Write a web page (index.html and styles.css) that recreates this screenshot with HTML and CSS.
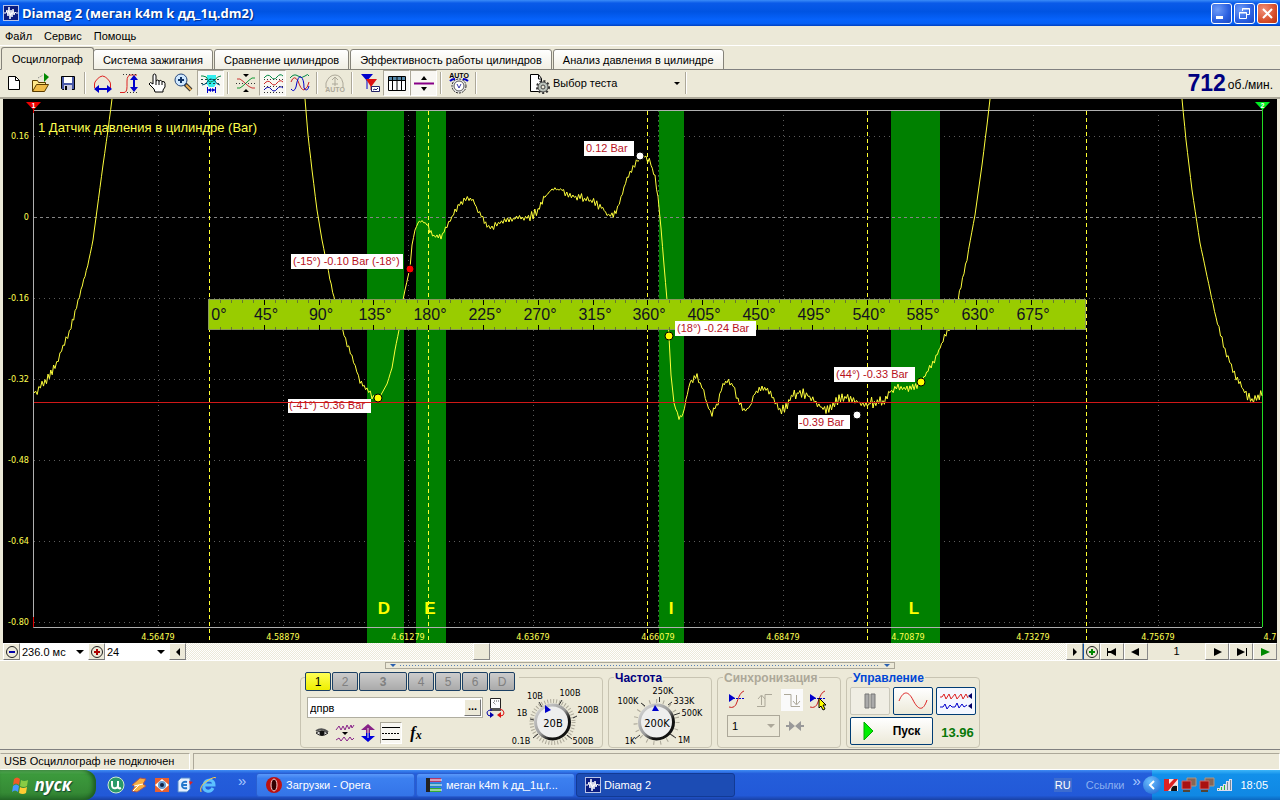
FILE: index.html
```html
<!DOCTYPE html>
<html lang="ru">
<head>
<meta charset="utf-8">
<title>Diamag 2</title>
<link rel="stylesheet" href="styles.css">
</head>
<body>
<header class="titlebar">
  <svg class="appicon" width="16" height="16" viewBox="0 0 16 16"><rect width="16" height="16" fill="#b8c4e8"/><rect x="1" y="1" width="14" height="14" fill="#0a1c80"/><path d="M1 8h2l1-3 1 6 1-9 1 12 1-9 1 7 1-8 1 6 1-3 1 1h2" fill="none" stroke="#fff"/></svg>
  <h1 class="title">Diamag 2 (меган k4m k дд_1ц.dm2)</h1>
  <div class="winbtns">
    <button class="winbtn" aria-label="Свернуть"><svg width="19" height="19"><path d="M4 13.500h7" stroke="#fff" stroke-width="3"/></svg></button>
    <button class="winbtn" aria-label="Восстановить"><svg width="19" height="19" fill="none" stroke="#fff"><path d="M7.500 7V4.500h7v6H12M7 5h8"/><path d="M4.500 8.500h7v6h-7zM4 9h8" /></svg></button>
    <button class="winbtn close" aria-label="Закрыть"><svg width="19" height="19"><path d="M5 5l9 9M14 5l-9 9" stroke="#fff" stroke-width="2"/></svg></button>
  </div>
</header>
<nav class="menu"><button>Файл</button><button>Сервис</button><button>Помощь</button></nav>
<div class="tabs" role="tablist">
  <button role="tab" class="tab active" aria-selected="true">Осциллограф</button><button role="tab" class="tab">Система зажигания</button><button role="tab" class="tab">Сравнение цилиндров</button><button role="tab" class="tab">Эффективность работы цилиндров</button><button role="tab" class="tab">Анализ давления в цилиндре</button>
</div>
<div class="toolbar">
  <button class="tool" aria-label="Новый"><svg width="22" height="22"><path d="M5.500 4.500h7l4 4v9h-11z" fill="#fff" stroke="#000"/><path d="M12.500 4.500v4h4" fill="none" stroke="#000"/></svg></button>
  <button class="tool" aria-label="Открыть"><svg width="22" height="22"><path d="M2.500 19V8.500h5l1 2h7V13" fill="#ffe88a" stroke="#5a3c00"/><path d="M2.500 19.500l4-7h12l-4 7z" fill="#f0bc48" stroke="#5a3c00"/><path d="M14 1l5 4-5 5z" fill="#080"/><path d="M8 6l5-3" stroke="#777" stroke-dasharray="1 1"/></svg></button>
  <button class="tool" aria-label="Сохранить"><svg width="22" height="22"><path d="M4.500 4.500h13v13h-12l-1-1z" fill="#4858a8" stroke="#000"/><path d="M7 5h8v6H7z" fill="#fff"/><path d="M7 13h8v5H7z" fill="#ccd"/><path d="M8 14h2v4H8z" fill="#000"/></svg></button>
  <i class="sep"></i>
  <button class="tool" aria-label="По горизонтали"><svg width="22" height="22" fill="none"><path d="M2.500 16v-4q0-2 2-4 3-4 6-4t6 4q2 2 2 4v4" stroke="#d22"/><path d="M5 17h12" stroke="#00c" stroke-width="2"/><path d="M2 17l5-4v8zM20 17l-5-4v8z" fill="#00c"/></svg></button>
  <button class="tool" aria-label="По вертикали"><svg width="22" height="22" fill="none"><path d="M1 20.500h4q3 0 3-6V9q0-6 4-6h6" stroke="#d22"/><path d="M4 2.500h15M8 20.500h10" stroke="#333" stroke-dasharray="1 2"/><path d="M15 7v10" stroke="#00c" stroke-width="2"/><path d="M15 3l-4 5h8zM15 20l-4-5h8z" fill="#00c"/></svg></button>
  <button class="tool" aria-label="Рука"><svg width="22" height="22"><path d="M7 12V4q0-2 1.500-2T10 4v5q2-2 3 0 2-1.500 3 .5 3-.5 3 2V15l-2 3v2H9l-1-3-5-5q1-3 4 0zM10 9v4M13 9v4M16 10v3" fill="#fff" stroke="#000"/></svg></button>
  <button class="tool" aria-label="Увеличить"><svg width="22" height="22"><path d="M12 12l6 6" stroke="#333" stroke-width="4"/><path d="M13 13l5 5" stroke="#f0b050" stroke-width="2"/><circle cx="8" cy="8" r="6" fill="#cfe8ff" stroke="#23467c"/><path d="M5 8h6M8 5v6" stroke="#136" stroke-width="2"/></svg></button>
  <button class="tool pressed" aria-label="Диапазон"><svg width="22" height="22" fill="none"><path d="M7 3h9v9l-2 3h-5l-2-3z" fill="#3ee"/><path d="M1 4h2q4 0 5 4t7 0q2-4 6-4" stroke="#084"/><path d="M1 7.500h20M1 11.500h20" stroke="#244" stroke-dasharray="2 2"/><path d="M2 13q4 0 6-4t7 0q2 4 5 4" stroke="#057"/><path d="M7.500 15v6M15.500 15v6M8 18h7" stroke="#00c"/><path d="M8 18l3-2v4zM15 18l-3-2v4z" fill="#00c"/></svg></button>
  <i class="sep"></i>
  <button class="tool" aria-label="Совместить"><svg width="22" height="22" fill="none"><path d="M2 7h3q3 2 6 5t6 4h3" stroke="#c33"/><path d="M2 16h3q3-2 6-5t6-5h3" stroke="#193"/><path d="M1 11.500h20" stroke="#333" stroke-dasharray="1 2"/><path d="M8 2h6l-3 3zM8 20h6l-3-3z" fill="#000"/></svg></button>
  <button class="tool pressed" aria-label="Разделить"><svg width="22" height="22" fill="none"><path d="M2 6q4-5 7-1t6 0 6-1" stroke="#084"/><path d="M2 12q4-5 7-1t6 0 6-1" stroke="#c22"/><path d="M2 18q4-5 7-1t6 0 6-1" stroke="#00a"/><path d="M2 7.500h19M2 14.500h19M2 20.500h19" stroke="#333" stroke-dasharray="1 2"/></svg></button>
  <button class="tool" aria-label="Наложить"><svg width="22" height="22" fill="none"><path d="M1 6q4-5 8-2t7 0 4 0" stroke="#084"/><path d="M2 10q3-8 7-1 3 9 6 9 4-2 5-8" stroke="#c22"/><path d="M2 17q3 4 5-2 2-12 5-10t3 11q3 5 5-2" stroke="#00c"/></svg></button>
  <i class="sep"></i>
  <button class="tool" disabled aria-label="Авто"><svg width="22" height="22" fill="none" stroke="#aca899"><path d="M2 16V11Q5 3 11 3t8 8v5M11 5v9M8 8l3-3 3 3M8 12h6"/><text class="auto" x="11" y="20" text-anchor="middle" stroke="none" fill="#aca899">AUTO</text></svg></button>
  <i class="sep"></i>
  <button class="tool" aria-label="Маркеры"><svg width="22" height="22"><path d="M2 2h12L8 9z" fill="#00c"/><path d="M8 8v9" stroke="#00c"/><path d="M7 7h11l-6 8z" fill="#d11"/><path d="M12 14v4" stroke="#d11"/><path d="M12.500 14.500h8v5h-8z" fill="#fff" stroke="#226"/><path d="M14 18l2-1 1 1 2-2" fill="none" stroke="#226"/></svg></button>
  <button class="tool pressed" aria-label="Таблица"><svg width="22" height="22"><path d="M2.500 4.500h17v14h-17z" fill="#fff" stroke="#000"/><path d="M3 5h16v3H3z" fill="#58a"/><path d="M3 8.500h16M6.500 5v13M11 5v13M15.500 5v13" stroke="#000"/></svg></button>
  <button class="tool pressed" aria-label="Линия"><svg width="22" height="22"><path d="M1 11.500h20" stroke="#808" stroke-width="2"/><path d="M8 8h6l-3-4zM8 15h6l-3 4z" fill="#000"/></svg></button>
  <i class="sep"></i>
  <button class="tool" aria-label="Автонастройка"><svg width="22" height="24"><text class="auto" x="11" y="7" text-anchor="middle">AUTO</text><circle cx="11" cy="15" r="7" fill="#e8e8e8" stroke="#222" stroke-dasharray="2 1"/><circle cx="11" cy="15" r="5" fill="#fff" stroke="#555"/><path d="M2 10q2-2 5-2M20 10q-2-2-5-2" stroke="#00c" stroke-width="2" fill="none"/><path d="M9 13l2 4 2-4" fill="none" stroke="#33a"/></svg></button>
  <i class="sep"></i>
  <label class="test"><svg width="22" height="22"><path d="M2.500 2.500h8l3 4v13h-11z" fill="#fff" stroke="#000"/><path d="M10.500 3v4h3" fill="none" stroke="#000"/><circle cx="15" cy="15" r="6" fill="none" stroke="#333" stroke-width="2" stroke-dasharray="2 2"/><circle cx="15" cy="15" r="5" fill="#bcc4bc" stroke="#444"/><circle cx="15" cy="15" r="2" fill="#ece9d8" stroke="#444"/></svg>
    <select class="plain" aria-label="Выбор теста"><option>Выбор теста</option></select><i class="arrow small"></i></label>
  <i class="sep"></i>
  <div class="rpm"><b>712</b><span>об./мин.</span></div>
</div>
<main class="scope">
<svg class="chart" viewBox="3 99 1274 544" preserveAspectRatio="xMidYMid meet">
  <rect x="3" y="99" width="1274" height="544" fill="#000"/>
  <g id="grid" stroke="#5c5c5c" stroke-dasharray="1 4"></g>
  <path d="M367 111h37v532h-37zM416 111h30v532h-30zM659 111h25v532h-25zM891 111h49v532h-49z" fill="#008000"/>
  <path d="M34 217.500H1262" stroke="#858585" stroke-dasharray="3 3"/>
  <path d="M658.500 111V627" stroke="#1e6b1e" stroke-dasharray="1 4"/>
  <path d="M34 110.500H1262M33.500 110V627.500H1262" stroke="#b0b0b0" fill="none"/>
  <path d="M33.500 106v7M33.500 617v10" stroke="#d00"/>
  <path d="M26 102h15l-7.500 8z" fill="#e00"/><path d="M1262.500 106V627" stroke="#2d2"/><path d="M1255 102h15l-7.500 8z" fill="#0e2"/>
  <text class="mark" x="33.500" y="108">1</text><text class="mark" x="1262.500" y="108">2</text>
  <path d="M209.500 111V643M428.500 111V643M647.500 111V643M867.500 111V643M1086.500 111V643" stroke="#ffff30" stroke-dasharray="4 3"/>
  <g class="ylab"><text x="29" y="139">0.16</text><text x="29" y="220">0</text><text x="29" y="301">-0.16</text><text x="29" y="382">-0.32</text><text x="29" y="463">-0.48</text><text x="29" y="544">-0.64</text><text x="29" y="625">-0.80</text></g>
  <g class="xlab"><text x="158" y="640">4.56479</text><text x="283" y="640">4.58879</text><text x="408" y="640">4.61279</text><text x="533" y="640">4.63679</text><text x="658" y="640">4.66079</text><text x="783" y="640">4.68479</text><text x="908" y="640">4.70879</text><text x="1033" y="640">4.73279</text><text x="1158" y="640">4.75679</text><text x="1270" y="640">4.7</text></g>
  <text class="chan" x="38" y="132">1 Датчик давления в цилиндре (Bar)</text>
  <g class="zone"><text x="384" y="614">D</text><text x="430" y="614">E</text><text x="671" y="614">I</text><text x="914" y="614">L</text></g>
  <g id="wave" fill="none" stroke="#ffff3c"></g>
  <rect x="208.500" y="299.500" width="877" height="30" fill="#9c0" stroke="#8a9a5a"/>
  <g id="ruler"></g>
  <path d="M584 141h50v15h-50zM291 254h112v15H291zM288 399h83v14h-83zM675 321h81v15h-81zM834 367h81v15h-81zM798 415h52v14h-52z" fill="#fff"/>
  <g class="tag"><text x="586" y="152">0.12 Bar</text><text x="293" y="265">(-15°) -0.10 Bar (-18°)</text><text x="289" y="409">(-41°) -0.36 Bar</text><text x="677" y="332">(18°) -0.24 Bar</text><text x="836" y="378">(44°) -0.33 Bar</text><text x="799" y="426">-0.39 Bar</text></g>
  <path d="M34 402.500H1262" stroke="#d01818"/>
  <g stroke="#000"><circle cx="640" cy="156" r="4" fill="#fff"/><circle cx="410" cy="269" r="4" fill="#f00"/><circle cx="378" cy="398" r="4" fill="#ff0"/><circle cx="669" cy="336" r="4" fill="#ff0"/><circle cx="921" cy="382" r="4" fill="#ff0"/><circle cx="857" cy="415" r="4" fill="#fff"/></g>
</svg>
</main>
<div class="scrollrow">
  <button class="sq" aria-label="Сжать"><svg width="16" height="16" fill="none"><circle cx="8" cy="8" r="5.500" stroke="#222"/><path d="M5 8h6" stroke="#00a" stroke-width="2"/></svg></button>
  <span class="combo time"><select aria-label="Развёртка"><option>236.0 мс</option></select><i class="arrow"></i></span>
  <button class="sq" aria-label="Растянуть"><svg width="16" height="16" fill="none"><circle cx="8" cy="8" r="5.500" stroke="#222"/><path d="M5 8h6M8 5v6" stroke="#a00" stroke-width="2"/></svg></button>
  <span class="combo count"><select aria-label="Масштаб"><option>24</option></select><i class="arrow"></i></span>
  <button class="sq" aria-label="Влево"><svg width="16" height="16"><path d="M10 4v8L6 8z"/></svg></button>
  <div class="track"><span class="thumb"></span></div>
  <button class="sq" aria-label="Вправо"><svg width="16" height="16"><path d="M6 4v8l4-4z"/></svg></button>
  <button class="sq focus" aria-label="Добавить"><svg width="16" height="16" fill="none"><circle cx="8" cy="8" r="5.500" stroke="#222"/><path d="M5 8h6M8 5v6" stroke="#080" stroke-width="2"/></svg></button>
  <button class="nav" aria-label="В начало"><svg width="16" height="16"><path d="M3 4h1v8H3zM5 8l7-4v8zM4 7h3v2H4z"/></svg></button>
  <button class="nav" aria-label="Назад"><svg width="16" height="16"><path d="M3 8l8-4v8z"/></svg></button>
  <output class="page">1</output>
  <button class="nav" aria-label="Вперёд"><svg width="16" height="16"><path d="M13 8L5 4v8z"/></svg></button>
  <button class="nav" aria-label="В конец"><svg width="16" height="16"><path d="M13 4h1v8h-1zM12 8L4 4v8z"/></svg></button>
  <button class="nav" aria-label="Воспроизвести"><svg width="16" height="16"><path d="M13 8L4 4v8z" fill="#080"/></svg></button>
</div>
<div class="splitter"><div class="groove"><i></i><span></span><i></i></div></div>
<section class="panel">
  <div class="group channel">
    <div class="chleft">
      <div class="chans"><button class="on">1</button><button>2</button><button class="wide">3</button><button>4</button><button>5</button><button>6</button><button>D</button></div>
      <div class="sensor"><span class="field"><input type="text" value="дпрв" aria-label="Датчик"><button aria-label="Обзор">...</button></span>
        <svg width="20" height="22"><path d="M4.500 1.500h10v10h-10z" fill="#fff" stroke="#222"/><path d="M4 11h11v3H4z" fill="#555"/><path d="M7 5l3 3M8 4h5" stroke="#555" stroke-dasharray="1 1"/><path d="M6 13q-5 0-5 3t4 3" stroke="#00a" fill="none"/><path d="M4 15l4 3-4 3z" fill="#00a"/><path d="M14 12q4 1 4 4t-4 3" stroke="#d11" fill="none"/><path d="M15 15l-4 3 4 3z" fill="#d11"/></svg></div>
      <div class="chtools">
        <button aria-label="Видимость"><svg width="20" height="20"><path d="M4 10q5-4 12 0-6 5-12 0z" fill="#ddd" stroke="#222"/><circle cx="10" cy="10" r="2.500" fill="#111"/><path d="M4 8q6-4 12 1" stroke="#555" stroke-width="2" fill="none"/></svg></button>
        <button aria-label="Фильтр"><svg width="20" height="20" fill="none"><path d="M1 7l3-4 2 4 2-4 2 4 2-5 2 4 2-4 1 3 2-3M1 17l3-2 2 3 3-4 3 4 3-4 2 3 2-2" stroke="#828"/><path d="M7 9h6l-3 3z" fill="#000"/></svg></button>
        <button aria-label="Смещение"><svg width="20" height="20"><path d="M10 1l7 6h-5v4H8V7H3z" fill="#828"/><path d="M10 19l7-6h-5v-3H8v3H3z" fill="#00d"/><path d="M10 5v10" stroke="#ece9d8"/></svg></button>
        <button class="pressed" aria-label="Связь"><svg width="20" height="20"><path d="M1 4.500h18M1 16.500h18" stroke="#000"/><path d="M1 10.500h18" stroke="#000" stroke-dasharray="2 1"/></svg></button>
        <button class="fx" aria-label="Функция">f<small>x</small></button>
      </div>
    </div>
    <svg class="dial" width="94" height="70" viewBox="508 678 94 70">
      <defs><linearGradient id="knob" x1="0" y1="0" x2="1" y2="1"><stop offset="0" stop-color="#ddd"/><stop offset=".5" stop-color="#999"/><stop offset=".7" stop-color="#111"/></linearGradient></defs>
      <circle cx="552.500" cy="722" r="21" fill="none" stroke="#aca899" stroke-width="4" stroke-dasharray="1 2"/><circle cx="552.500" cy="722" r="17" fill="#eee" stroke="url(#knob)" stroke-width="3"/>
      <path d="M545 705l6 5-6 3z" fill="#00c"/><path d="M530 719l4 1M539 702l3 5M559 705l3-5M573 718l4-2M533 738l5-4M567 735l5 4" stroke="#333"/>
      <g class="diallab"><text x="535" y="699">10В</text><text x="570" y="696">100В</text><text x="522" y="716">1В</text><text x="588" y="713">200В</text><text x="521" y="744">0.1В</text><text x="583" y="744">500В</text></g><text class="dialval" x="553" y="727">20В</text>
    </svg>
  </div>
  <div class="group freq"><span class="legend">Частота</span>
    <svg class="dial" width="104" height="70" viewBox="607 678 104 70">
      <circle cx="655.500" cy="722" r="21" fill="none" stroke="#aca899" stroke-width="4" stroke-dasharray="1 6"/><circle cx="655.500" cy="722" r="17" fill="#eee" stroke="url(#knob)" stroke-width="3"/>
      <path d="M651 711l3-6 4 6z" fill="#00c"/><path d="M640 703l4 3M658.500 697v5M667 705l4-3M673 715l6-2M634 739l5-4M669 734l6 4" stroke="#333"/>
      <g class="diallab"><text x="662" y="694">250K</text><text x="627" y="704">100K</text><text x="683" y="704">333K</text><text x="691" y="716">500K</text><text x="629" y="744">1K</text><text x="683" y="743">1M</text></g><text class="dialval" x="656" y="727">200K</text>
    </svg>
  </div>
  <div class="group sync"><span class="legend off">Синхронизация</span>
    <div class="row"><button aria-label="Уровень"><svg width="22" height="22" fill="none"><path d="M2 18q6 2 8-5 3-10 7-11" stroke="#c22"/><path d="M3 9.500h15" stroke="#00c" stroke-dasharray="2 1"/><path d="M2 5l6 4-6 4z" fill="#00c"/></svg></button>
      <button disabled aria-label="Фронт"><svg width="22" height="22" fill="none" stroke="#aca899"><path d="M3 17.500h8v-12h7M7.500 16V7M4 10l3.500-4 3.500 4"/></svg></button>
      <button disabled class="lit" aria-label="Спад"><svg width="22" height="22" fill="none" stroke="#aca899"><path d="M3 5.500h7v12h9M15.500 6v9M12 12l3.500 4 3.500-4"/></svg></button>
      <button aria-label="Выбор уровня"><svg width="22" height="22" fill="none"><path d="M2 18q6 2 8-5 3-10 7-11" stroke="#c22"/><path d="M3 9.500h15" stroke="#00c" stroke-dasharray="2 1"/><path d="M2 5l6 4-6 4z" fill="#00c"/><path d="M11 9v10l2-2 2 4 2-1-2-4h3z" fill="#ff0" stroke="#000"/></svg></button></div>
    <div class="row"><span class="combo syncnum"><select aria-label="Канал"><option>1</option></select><i class="arrow"></i></span><svg width="20" height="12"><path d="M1 6h5M14 6h5" stroke="#999" stroke-width="2"/><path d="M4 1l6 5-6 5zM16 1l-6 5 6 5z" fill="#999"/></svg></div>
  </div>
  <div class="group control"><span class="legend blue">Управление</span>
    <div class="row"><button class="big" disabled aria-label="Пауза"><svg width="30" height="20"><path d="M10 3h4v14h-4zM16 3h4v14h-4z" fill="#aaa" stroke="#777"/></svg></button>
      <button class="big" aria-label="Синус"><svg width="30" height="20" fill="none"><path d="M1 10C5 0 10-1 15 9s10 12 14 0" stroke="#d22"/></svg></button>
      <button class="big lit" aria-label="Сигналы"><svg width="34" height="22" fill="none"><path d="M1 7h2l2-3 2 5 3-5 2 5 4-5 2 5 4-5 2 5 3-5 2 4" stroke="#d22"/><path d="M1 17h3l2-3 2 5 3-4 2 2h3l2-4 2 5 3-4 2 3 3-2" stroke="#00c"/><path d="M33 3v6l-4-3zM33 13v6l-4-3z" fill="#006"/></svg></button></div>
    <div class="row"><button class="start"><svg width="12" height="20"><path d="M1 1l9 9-9 9z" fill="#0e0" stroke="#0a0"/></svg><b>Пуск</b></button><output class="volt">13.96</output></div>
  </div>
</section>
<footer class="status"><span class="cell">USB Осциллограф не подключен</span><span class="cell rest"></span></footer>
<div class="taskbar">
  <button class="startbtn"><svg width="20" height="20"><path d="M4 4q3-3 6 0L9 10q-3-3-6 0z" fill="#f05a28"/><path d="M11 5q3 2 7 0l-1 6q-3 2-7 0z" fill="#8c4"/><path d="M3 11q3-3 6 0l-1 6q-3-3-6 0z" fill="#49f"/><path d="M10 12q3 2 7 0l-1 6q-3 2-7 0z" fill="#fc3"/></svg><span>пуск</span></button>
  <div class="quick">
    <svg width="18" height="18"><circle cx="9" cy="9" r="8" fill="#2a9a6a" stroke="#cfe8d4"/><path d="M5 5v4q0 4 4 3 2 0 2-3V5m0 6q1 2 3 1" fill="none" stroke="#fff" stroke-width="2"/></svg>
    <svg width="18" height="18"><path d="M10 2l6 1-3 5 3 2-9 6-5-1 3-5-3-1z" fill="#f8b040" stroke="#a55"/><path d="M4 10l9-2M3 15l6-6" stroke="#fff"/></svg>
    <svg width="18" height="18"><path d="M2 2h14v14H2z" fill="#e86030"/><path d="M2 9l7-6 7 6-7 6z" fill="#fff"/><circle cx="9" cy="9" r="4" fill="#69c"/><circle cx="9" cy="9" r="2" fill="#124"/></svg>
    <svg width="18" height="18"><path d="M2 5l3-3h9v11l-3 3H2z" fill="#e4f0ff" stroke="#58c"/><path d="M11 6Q6 5 6 9t5 3M6 9h5" fill="none" stroke="#27c" stroke-width="2"/><path d="M13 5l4 1-3 3z" fill="#d22"/></svg>
    <svg width="18" height="18"><path d="M14 12q-2 4-6 3-4-1-3-6t6-5q4 1 4 5H6" fill="none" stroke="#5cc0ff" stroke-width="3"/><path d="M2 16Q0 10 8 5t9-3" fill="none" stroke="#fc4"/></svg>
  </div>
  <span class="chev">»</span>
  <button class="task"><svg width="18" height="18"><ellipse cx="9" cy="9" rx="8" ry="8" fill="#b11"/><ellipse cx="9" cy="9" rx="3" ry="6" fill="#300" stroke="#fcc"/></svg>Загрузки - Opera</button>
  <button class="task"><svg width="18" height="18"><path d="M1 2h15v4H1z" fill="#b3386a"/><path d="M1 7h15v4H1z" fill="#28b"/><path d="M1 12h15v4H1z" fill="#3a3"/><path d="M1 2h4v14H1z" fill="#222"/><path d="M5 4h12M5 9h12M5 14h12" stroke="#fff"/></svg>меган k4m k дд_1ц.r...</button>
  <button class="task current"><svg width="16" height="16"><rect width="16" height="16" fill="#b8c4e8"/><rect x="1" y="1" width="14" height="14" fill="#0a1c80"/><path d="M1 8h2l1-3 1 6 1-9 1 12 1-9 1 7 1-8 1 6 1-3 1 1h2" fill="none" stroke="#fff"/></svg>Diamag 2</button>
  <span class="lang">RU</span><span class="links">Ссылки</span><span class="chev">»</span>
  <div class="tray">
    <button class="hide" aria-label="Скрыть"><svg width="16" height="16"><path d="M10 4L6 8l4 4" fill="none" stroke="#fff" stroke-width="2"/></svg></button>
    <svg width="16" height="16"><path d="M1 2h14v12H1z" fill="#f4e4e4"/><path d="M1 2h5v5l5-5h4L5 14H1z" fill="#d22"/><path d="M8 14q0-6 6-5v5z" fill="#111"/></svg>
    <svg width="16" height="16"><path d="M6 1h9v8H6z" fill="#865" stroke="#a98"/><path d="M1 4h9v8H1z" fill="#a11" stroke="#c66"/><path d="M2 14h7" stroke="#543" stroke-width="2"/></svg>
    <svg width="16" height="16"><path d="M6 1h9v8H6z" fill="#865" stroke="#a98"/><path d="M1 4h9v8H1z" fill="#a11" stroke="#c66"/><path d="M2 14h7" stroke="#543" stroke-width="2"/></svg>
    <svg width="16" height="16"><path d="M0 11h3v3H0zM3 9h3v5H3zM6 7h3v7H6zM9 4h3v10H9zM12 2h3v12h-3z" fill="#dde"/><path d="M1 12h1v1H1zM4 10h1v3H4zM7 8h1v5H7z" fill="#3b3"/><path d="M10 5h1v8h-1zM13 3h1v10h-1z" fill="#789"/></svg>
    <time>18:05</time>
  </div>
</div>
<script src="app.js"></script>
</body>
</html>
```
FILE: styles.css
```css
* { box-sizing: border-box; }
body { margin: 0; min-height: 100vh; display: flex; flex-direction: column; background: #ece9d8; color: #000; font-family: "Liberation Sans", Arial, sans-serif; font-size: 11px; line-height: 14px; overflow-x: hidden; }
button, input, select { font: inherit; color: inherit; margin: 0; padding: 0; border: 0; background: none; border-radius: 0; }
button { display: flex; align-items: center; justify-content: center; flex-shrink: 0; }
select { appearance: none; outline: 0; }
svg { display: block; flex-shrink: 0; }

.titlebar { height: 26px; display: flex; align-items: center; padding: 0 2px 0 3px; gap: 3px; background: linear-gradient(#3a8cf8 0, #0a5ae8 12%, #0054e3 45%, #0662fb 75%, #0660f5 90%, #0040c0); }
.title { margin: 0; flex: 1; color: #fff; font: bold 13px/20px "Open Sans", sans-serif; text-shadow: 1px 1px 1px #002a80; }
.winbtns { display: flex; gap: 2px; }
.winbtn { width: 21px; height: 21px; border: 1px solid #fff; border-radius: 3px; background: radial-gradient(circle at 30% 30%, #6f9cf8, #2a5fe0 60%, #1c48c0); }
.winbtn.close { background: radial-gradient(circle at 30% 30%, #f0907a, #d8502c 60%, #b83010); }

.menu { height: 20px; display: flex; gap: 12px; padding-left: 5px; border-bottom: 1px solid #fff; }
.tabs { display: flex; align-items: flex-end; height: 24px; padding-left: 1px; gap: 1px; box-shadow: inset 0 -1px #808080; }
.tab { height: 21px; padding: 0 9px; border: 1px solid #85837a; border-radius: 3px 3px 0 0; background: linear-gradient(#fff, #f1efe4); }
.tab.active { height: 23px; padding: 0 10px; margin-right: -2px; background: #ece9d8; border-bottom-color: #ece9d8; }

.toolbar { display: flex; align-items: center; height: 29px; padding-bottom: 1px; border-bottom: 2px solid #aca899; }
.tool { width: 27px; height: 26px; }
.pressed { border: 1px solid; border-color: #aca899 #fff #fff #aca899; background: #f8f7f2; }
.sep { width: 8px; height: 22px; flex-shrink: 0; background: linear-gradient(90deg, transparent 3px, #aca899 3px, #aca899 4px, #fff 4px, #fff 5px, transparent 5px); }
.auto { font: bold 7px "Liberation Sans", sans-serif; }
.test { display: flex; align-items: center; gap: 3px; width: 154px; margin-left: 48px; padding-right: 2px; flex-shrink: 0; }
.plain { flex: 1; min-width: 0; }
.arrow { width: 0; height: 0; border: 4px solid transparent; border-top-color: currentColor; border-bottom: 0; flex-shrink: 0; pointer-events: none; }
.arrow.small { border-width: 3px 3px 0; }
.rpm { margin-left: auto; padding-right: 7px; display: flex; align-items: center; gap: 2px; font-size: 12px; }
.rpm b { font: bold 23px/24px "Liberation Sans", sans-serif; color: #000080; }
.rpm span { padding-top: 3px; }

.scope { flex: 1 1 0; min-height: 0; display: flex; padding: 0 3px; }
.chart { width: 100%; height: 100%; background: #000; }
.ylab, .xlab { fill: #ffff50; font-size: 9px; font-family: "DejaVu Sans Condensed", sans-serif; }
.ylab { text-anchor: end; }
.xlab { text-anchor: middle; }
.mark { fill: #fff; font-size: 7px; font-weight: bold; text-anchor: middle; }
.chan { fill: #ffff50; font-size: 13px; }
.zone { fill: #ff0; font-size: 17px; font-weight: bold; text-anchor: middle; }
.deg { fill: #112; font-size: 16px; text-anchor: middle; }
.tag { fill: #b8101c; font-size: 11px; }

.scrollrow { display: flex; height: 18px; padding: 0 3px; border-bottom: 1px solid #fff; flex-shrink: 0; }
.sq, .nav { border: 1px solid; border-color: #fff #888 #777 #fff; background: #ece9d8; width: 17px; }
.nav { width: 24px; }
.focus { border-left: 1px solid #15a; }
.combo { display: flex; align-items: center; background: #fff; padding: 0 4px 0 2px; }
.combo select { flex: 1; min-width: 0; }
.time { width: 68px; }
.count { width: 64px; }
.track { flex: 1; background: repeating-conic-gradient(#fff 0 25%, #ece9d8 0 50%) 0 0 / 2px 2px; display: flex; padding-left: 22.5%; }
.thumb { width: 17px; border: 1px solid; border-color: #fff #888 #888 #fff; background: #ece9d8; }
.page { width: 57px; text-align: center; line-height: 17px; }

.splitter { height: 8px; display: flex; justify-content: center; padding-top: 1px; flex-shrink: 0; }
.groove { width: 510px; height: 7px; border: 1px solid #aca899; display: flex; align-items: center; gap: 4px; padding: 0 4px; }
.groove i { border: 3px solid transparent; border-top-color: #2a60b0; border-bottom: 0; }
.groove span { flex: 1; height: 1px; background: repeating-linear-gradient(90deg, #5580b8 0 1px, transparent 1px 3px); }
.panel { display: flex; justify-content: center; gap: 5px; height: 81px; padding: 8px 0 1px; border-bottom: 1px solid #808080; flex-shrink: 0; }
.group { border: 1px solid #c8c4b2; border-radius: 4px; height: 71px; }
.legend { display: block; width: max-content; background: #ece9d8; font-weight: bold; font-size: 12px; color: #000080; margin: -7px 0 0 5px; padding: 0 1px; height: 14px; }
.off { color: #aca899; }
.blue { color: #0046d5; }
.channel { width: 303px; display: flex; }
.chleft { width: 207px; margin-top: -6px; padding-left: 4px; flex-shrink: 0; }
.chans { display: flex; gap: 1px; background: #ece9d8; width: max-content; padding-right: 4px; }
.chans button { width: 26px; height: 19px; border: 1px solid #1c4064; border-radius: 2px; background: linear-gradient(#ccc, #aaa); color: #808080; font-size: 12px; }
.chans .wide { width: 48px; font-weight: bold; }
.chans .on { background: linear-gradient(#ff5, #ee0); color: #000; }
.sensor { display: flex; gap: 3px; margin: 6px 0 0 2px; }
.field { display: flex; width: 176px; height: 21px; border: 1px solid #b0aea0; background: #fff; padding: 1px; }
.field input { flex: 1; min-width: 0; padding-left: 1px; }
.field button { width: 17px; border: 1px solid; border-color: #fff #777 #777 #fff; background: #ece9d8; font-weight: bold; line-height: 8px; padding-bottom: 4px; }
.chtools { display: flex; gap: 1px; padding-left: 6px; margin-top: 3px; }
.chtools button { width: 22px; height: 22px; }
.chtools .fx { width: 26px; font: italic bold 16px "Liberation Serif", serif; }
.fx small { font-size: 12px; padding-top: 4px; }
.freq { width: 104px; }
.freq .dial { margin: -7px 0 0 -1px; }
.diallab, .dialval { font-family: "DejaVu Sans Condensed", sans-serif; font-size: 9px; text-anchor: middle; }
.dialval { font-size: 11px; }
.dial { overflow: visible; }
.sync { width: 124px; }
.row { display: flex; align-items: center; }
.sync .row { padding-left: 9px; margin-top: 4px; gap: 5px; }
.lit { background: #fafafa; }
.syncnum { width: 53px; height: 22px; border: 1px solid #aca899; background: transparent; padding-left: 4px; }
.syncnum .arrow { color: #aca899; }
.control { width: 134px; }
.control .row { gap: 3px; padding-left: 3px; margin-top: 2px; }
.big { width: 40px; height: 28px; border: 1px solid #003c74; border-radius: 2px; background: linear-gradient(#fff, #ece9d8); }
.big.lit { background: #f4f7ff; }
.big:disabled { border-color: #c9c7ba; background: #f0eee4; }
.start { width: 83px; height: 28px; border: 1px solid #003c74; border-radius: 2px; background: linear-gradient(#fff, #ece9d8); gap: 18px; font-size: 12px; }
.volt { flex: 1; text-align: center; color: #087808; font-weight: bold; font-size: 13px; padding-top: 4px; }

.status { display: flex; height: 20px; gap: 3px; padding-top: 3px; flex-shrink: 0; }
.cell { border: 1px solid; border-color: #aca899 #fff #fff transparent; width: 190px; padding-left: 3px; white-space: nowrap; }
.rest { flex: 1; border-left-color: #aca899; }

.taskbar { display: flex; align-items: center; height: 30px; color: #fff; background: linear-gradient(#3f8cf3 0, #245edb 12%, #2259d8 85%, #1941a5); flex-shrink: 0; }
.startbtn { width: 96px; height: 30px; border-radius: 0 12px 12px 0; background: linear-gradient(#5eb65e 0, #3c9a3c 15%, #358a35 75%, #27702a); color: #fff; gap: 4px; box-shadow: inset -3px 0 4px #1d5a20; font: italic bold 17px/22px "Open Sans", sans-serif; text-shadow: 1px 1px 1px #143; padding-right: 14px; }
.quick { display: flex; gap: 5px; padding-left: 11px; width: 142px; }
.chev { width: 18px; font-size: 15px; line-height: 20px; padding-bottom: 8px; color: #a8c8ff; }
.task { width: 159px; height: 24px; margin-right: 1px; border: 1px solid #2a5fd0; border-radius: 3px; background: linear-gradient(#5a98fa, #3c80f0 20%, #3474e8); color: #fff; justify-content: flex-start; padding-left: 8px; gap: 3px; }
.task.current { background: #1c4cb4; border-color: #123a94; }
.lang { margin-left: auto; background: #3c6cd0; padding: 0 1px; }
.links { padding: 0 8px 0 14px; color: #8cb0f0; }
.tray { display: flex; align-items: center; align-self: stretch; gap: 2px; padding-right: 12px; margin-left: 2px; background: linear-gradient(#3cb4f8 0, #1290ea 15%, #1088e4 85%, #0c68c0); }
.hide { width: 18px; height: 18px; border-radius: 50%; background: radial-gradient(circle at 40% 30%, #6cc0ff, #1860d0); margin-left: -9px; }
.tray time { padding-left: 5px; }
```
FILE: app.js
```js
const make = (parent, name, attrs, text) => {
  const el = document.createElementNS('http://www.w3.org/2000/svg', name);
  for (const key in attrs) el.setAttribute(key, attrs[key]);
  if (text) el.textContent = text;
  parent.appendChild(el);
};

const grid = document.getElementById('grid');
for (let x = 158.5; x < 1262; x += 125) make(grid, 'path', { d: `M${x} 115V627` });
for (const y of [136.5, 298.5, 379.5, 460.5, 541.5, 622.5]) make(grid, 'path', { d: `M34 ${y}H1262` });

// Crank angle scale: five divisions for every 45 degrees
const ruler = document.getElementById('ruler');
for (let i = 1; i < 80; i++) {
  const x = Math.round(209 + i * 10.96) + 0.5;
  const major = i % 5 === 0;
  const len = major ? 5 : 3;
  make(ruler, 'path', { d: `M${x} 300v${len}M${x} 330v-${len}`, stroke: major ? '#000' : '#667733' });
}
make(ruler, 'text', { class: 'deg', x: 219, y: 320 }, '0°');
for (let i = 1; i < 16; i++) make(ruler, 'text', { class: 'deg', x: Math.round(211 + i * 54.8), y: 320 }, i * 45 + '°');

// Signal key points as x, y, ripple amplitude
const traces = [
  [[34,393,3],[42,385,3],[48,378,3],[55,367,2],[60,355,2],[66,340,2],[71,327,2],[75,313,1],[81,290,1],[85,276,1],[89,260,0],[93,240,0],[97,210,0],[103,165,0],[108,130,0],[112,99,0]],
  [[305,99,0],[308,135,0],[312,170,0],[317,210,0],[322,240,0],[327,265,1],[334,298,1],[344,335,2],[352,358,2],[360,380,2],[367,390,2],[372,396,1],[378,400,0],[382,393,0],[387,384,0],[392,368,0],[395,350,0],[399,330,0],[400,318,0],[403,300,0],[405,290,0],[410,268,0],[412,245,0],[415,230,0],[418,223,1],[422,221,1],[427,225,2],[431,233,2],[437,238,2],[441,236,1],[447,226,1],[452,217,2],[458,206,2],[464,200,2],[469,198,1],[473,200,1],[478,211,1],[483,218,2],[487,225,2],[492,228,2],[500,222,2],[506,220,2],[515,218,2],[530,218,3],[538,209,2],[545,197,1],[552,189,1],[562,190,2],[570,196,2],[580,198,3],[592,201,3],[600,205,2],[607,214,2],[612,216,2],[616,212,1],[621,198,1],[627,178,2],[633,168,2],[638,159,2],[641,155,1],[646,157,2],[651,164,2],[655,178,1],[658,198,0],[661,228,0],[664,265,0],[667,300,0],[669,337,0],[671,375,0],[674,403,1],[679,418,1],[683,414,1],[686,400,1],[690,382,2],[697,376,2],[702,387,2],[707,404,2],[712,414,2],[718,402,2],[723,384,2],[727,380,2],[733,385,2],[738,400,2],[744,411,1],[750,407,2],[755,393,2],[762,387,2],[766,388,2],[772,395,2],[780,410,3],[786,408,3],[790,397,3],[800,392,3],[808,395,3],[816,403,3],[826,411,3],[833,405,3],[842,397,3],[852,399,3],[858,402,3],[866,406,4],[873,402,3],[883,401,3],[890,392,2],[898,387,2],[907,389,2],[917,386,2],[921,382,1],[928,370,2],[936,358,2],[943,340,2],[949,328,2],[958,300,2],[967,258,0],[975,215,0],[982,165,0],[987,125,0],[990,99,0]],
  [[1182,99,0],[1186,140,0],[1192,190,0],[1200,243,0],[1210,290,1],[1216,318,2],[1225,350,2],[1236,378,2],[1246,394,3],[1252,400,3],[1258,399,3],[1262,391,1]]
];
let seed = 7;
const noise = () => (seed = (seed * 16807) % 2147483647) / 1073741823 - 1;
for (const pts of traces) {
  let d = `M${pts[0][0]} ${pts[0][1]}`;
  let side = 1;
  for (let i = 1; i < pts.length; i++) {
    const [x0, y0, a] = pts[i - 1], [x1, y1] = pts[i];
    const n = Math.max(1, Math.round((x1 - x0) / 1.5));
    for (let k = 1; k <= n; k++) {
      const t = k / n;
      side = -side;
      const wiggle = side * a * (0.9 + noise() * 0.8);
      d += `L${(x0 + (x1 - x0) * t).toFixed(1)} ${(y0 + (y1 - y0) * t + wiggle).toFixed(1)}`;
    }
  }
  make(document.getElementById('wave'), 'path', { d });
}
```
